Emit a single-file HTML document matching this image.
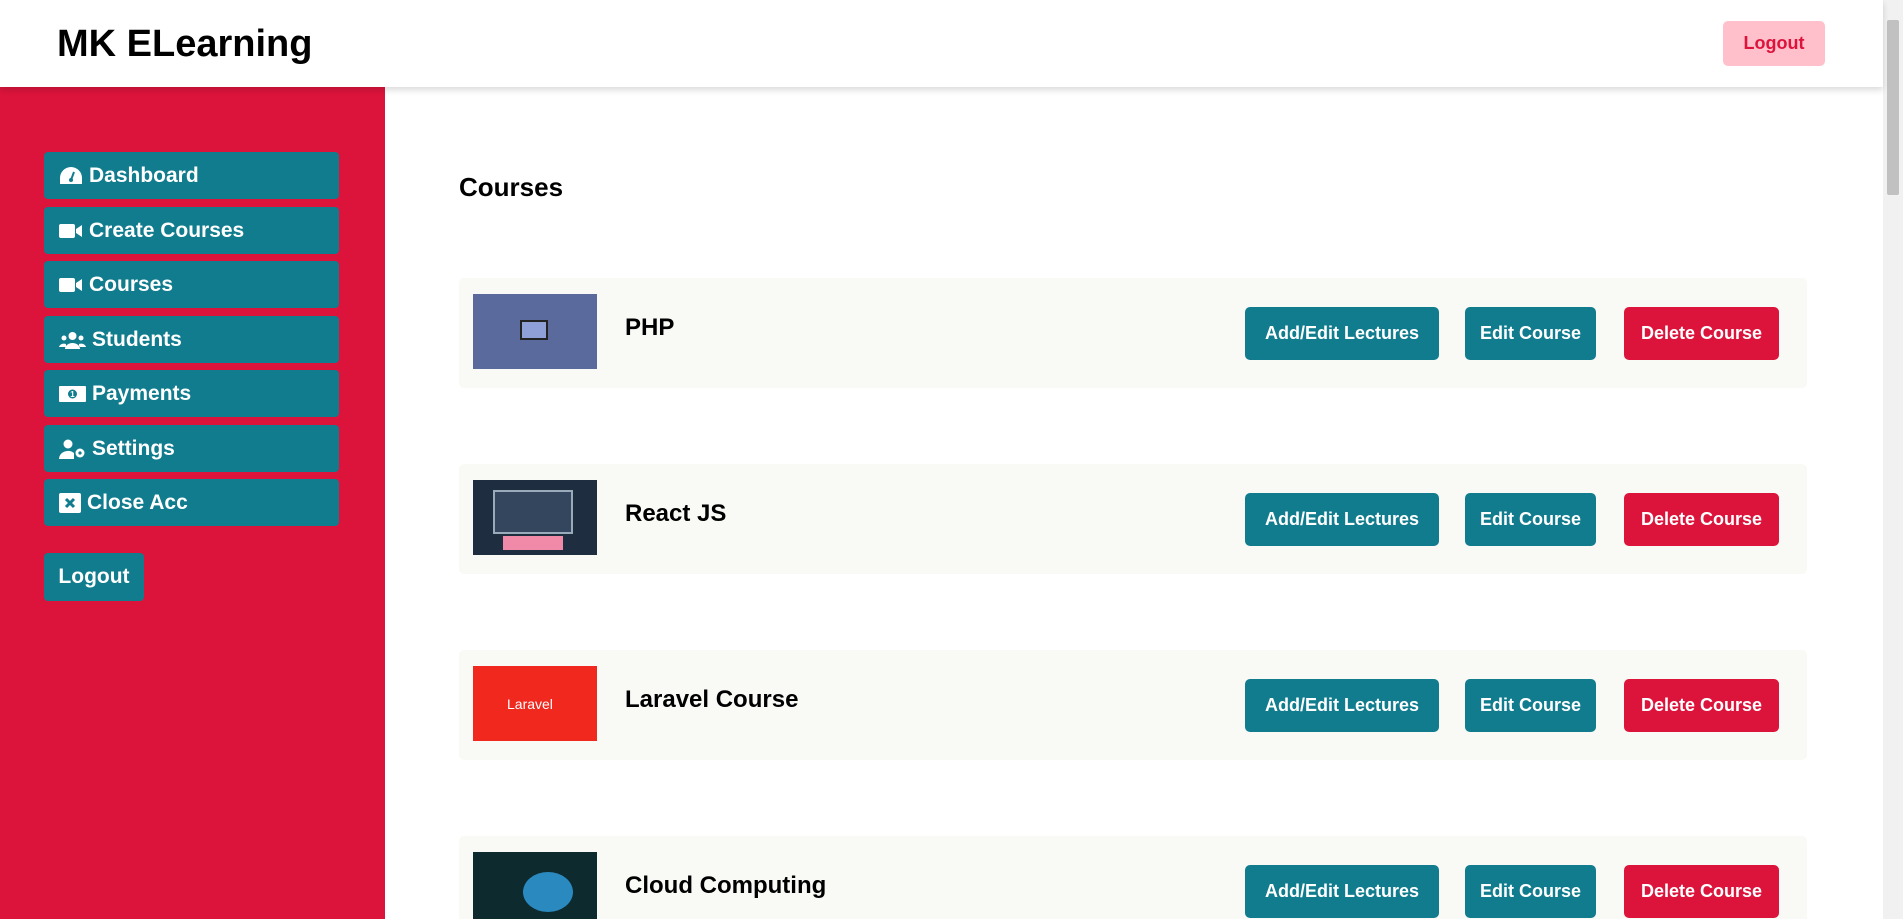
<!DOCTYPE html>
<html style="width:1903px;height:919px;overflow:hidden"><head><meta charset="utf-8"><style>
*{box-sizing:border-box;margin:0;padding:0}
body{width:1903px;height:919px;overflow:hidden;font-family:"Liberation Sans",sans-serif;background:#fff;position:relative}
.hdr{position:absolute;left:0;top:0;width:1883px;height:87px;background:#fff;box-shadow:0 3px 6px rgba(0,0,0,.15);z-index:2}
.hdr h1{position:absolute;left:57px;top:23px;font-size:38px;font-weight:bold;color:#000}
.hlo{position:absolute;left:1723px;top:21px;width:102px;height:45px;background:#ffc0cb;color:#dc143c;border-radius:5px;font-weight:bold;font-size:18px;text-align:center;line-height:45px}
.side{position:absolute;left:0;top:87px;width:385px;height:832px;background:#dc143c}
.nav{position:absolute;left:44px;width:295px;height:47px;background:#107c8d;border-radius:4px;color:#fff;font-size:21px;font-weight:bold;line-height:47px;padding-left:15px;display:flex;align-items:center;gap:6px}
.nav svg{flex:none}
.slo{position:absolute;left:44px;width:100px;height:48px;background:#107c8d;border-radius:4px;color:#fff;font-size:21px;font-weight:bold;line-height:48px;text-align:center}
.main{position:absolute;left:0;top:0;width:1903px;height:919px;overflow:hidden}
.main h2{position:absolute;left:459px;top:172px;font-size:26px;font-weight:bold}
.card{position:absolute;left:459px;width:1348px;height:110px;background:#f9f9f6;border-radius:5px;overflow:hidden}
.img{position:absolute;left:14px;top:16px;width:124px;height:75px}
.ct{position:absolute;left:166px;top:36px;font-size:24px;font-weight:bold}
.b{position:absolute;top:29px;height:53px;border-radius:5px;color:#fff;font-size:18px;font-weight:bold;line-height:53px;text-align:center;background:#107c8d}
.b1{left:786px;width:194px}.b2{left:1006px;width:131px}.b3{left:1165px;width:155px;background:#dc143c}
.sb{position:absolute;right:0;top:0;width:20px;height:919px;background:#f1f1f1}
.sb div{position:absolute;left:4px;top:20px;width:12px;height:175px;background:#c1c1c1;border-radius:2px}
</style></head><body>
<div class="main"><h2>Courses</h2>
<div class="card" style="top:278px"><div class="img" style="background:#5a6a9c"><div style="position:absolute;left:47px;top:26px;width:28px;height:20px;background:#8fa0d8;border:2px solid #222"></div></div><div class="ct">PHP</div><div class="b b1">Add/Edit Lectures</div><div class="b b2">Edit Course</div><div class="b b3">Delete Course</div></div>
<div class="card" style="top:464px"><div class="img" style="background:#1f2d40"><div style="position:absolute;left:20px;top:10px;width:80px;height:44px;border:2px solid #9ab;background:#34465e"></div><div style="position:absolute;left:30px;top:56px;width:60px;height:14px;background:#f08aa8"></div></div><div class="ct">React JS</div><div class="b b1">Add/Edit Lectures</div><div class="b b2">Edit Course</div><div class="b b3">Delete Course</div></div>
<div class="card" style="top:650px"><div class="img" style="background:#f0281e"><div style="position:absolute;left:34px;top:30px;color:#fff;font-size:14px">Laravel</div></div><div class="ct">Laravel Course</div><div class="b b1">Add/Edit Lectures</div><div class="b b2">Edit Course</div><div class="b b3">Delete Course</div></div>
<div class="card" style="top:836px;height:83px;border-radius:5px 5px 0 0"><div class="img" style="background:#0d2a2e"><div style="position:absolute;left:50px;top:20px;width:50px;height:40px;background:#2a8ac0;border-radius:50%"></div></div><div class="ct">Cloud Computing</div><div class="b b1">Add/Edit Lectures</div><div class="b b2">Edit Course</div><div class="b b3">Delete Course</div></div>
</div>
<div class="hdr"><h1>MK ELearning</h1><div class="hlo">Logout</div></div>
<div class="side">
<div class="nav" style="top:65px"><svg width="24" height="20" viewBox="0 0 24 20"><path d="M12 1A11 11 0 0 0 1 12v6h22v-6A11 11 0 0 0 12 1z" fill="#fff"/><path d="M12 14l3-8" stroke="#107c8d" stroke-width="2"/><circle cx="12" cy="14" r="2" fill="#107c8d"/></svg>Dashboard</div>
<div class="nav" style="top:120px"><svg width="24" height="18" viewBox="0 0 24 18"><rect x="0" y="2" width="16" height="14" rx="2" fill="#fff"/><path d="M17 7l6-4v12l-6-4z" fill="#fff"/></svg>Create Courses</div>
<div class="nav" style="top:174px"><svg width="24" height="18" viewBox="0 0 24 18"><rect x="0" y="2" width="16" height="14" rx="2" fill="#fff"/><path d="M17 7l6-4v12l-6-4z" fill="#fff"/></svg>Courses</div>
<div class="nav" style="top:229px"><svg width="27" height="20" viewBox="0 0 27 20"><circle cx="13.5" cy="6" r="4" fill="#fff"/><circle cx="5" cy="8" r="2.5" fill="#fff"/><circle cx="22" cy="8" r="2.5" fill="#fff"/><path d="M6 19a7.5 6 0 0 1 15 0z M0 17a5 4 0 0 1 7-3v3z M27 17a5 4 0 0 0-7-3v3z" fill="#fff"/></svg>Students</div>
<div class="nav" style="top:283px"><svg width="27" height="16" viewBox="0 0 27 16"><rect width="27" height="16" rx="1" fill="#fff"/><circle cx="13.5" cy="8" r="4.5" fill="#107c8d"/><text x="13.5" y="11" font-size="8" fill="#fff" text-anchor="middle" font-family="Liberation Sans">1</text></svg>Payments</div>
<div class="nav" style="top:338px"><svg width="27" height="20" viewBox="0 0 27 20"><circle cx="9" cy="5" r="4.5" fill="#fff"/><path d="M0 20a9 8 0 0 1 15-6v6z" fill="#fff"/><circle cx="21" cy="14" r="4.5" fill="#fff"/><circle cx="21" cy="14" r="1.6" fill="#107c8d"/></svg>Settings</div>
<div class="nav" style="top:392px"><svg width="22" height="20" viewBox="0 0 22 20"><rect width="22" height="20" rx="2" fill="#fff"/><path d="M7 6l8 8M15 6l-8 8" stroke="#107c8d" stroke-width="3"/></svg>Close Acc</div>
<div class="slo" style="top:466px">Logout</div>
</div>
<div class="sb"><div></div></div>
</body></html>
